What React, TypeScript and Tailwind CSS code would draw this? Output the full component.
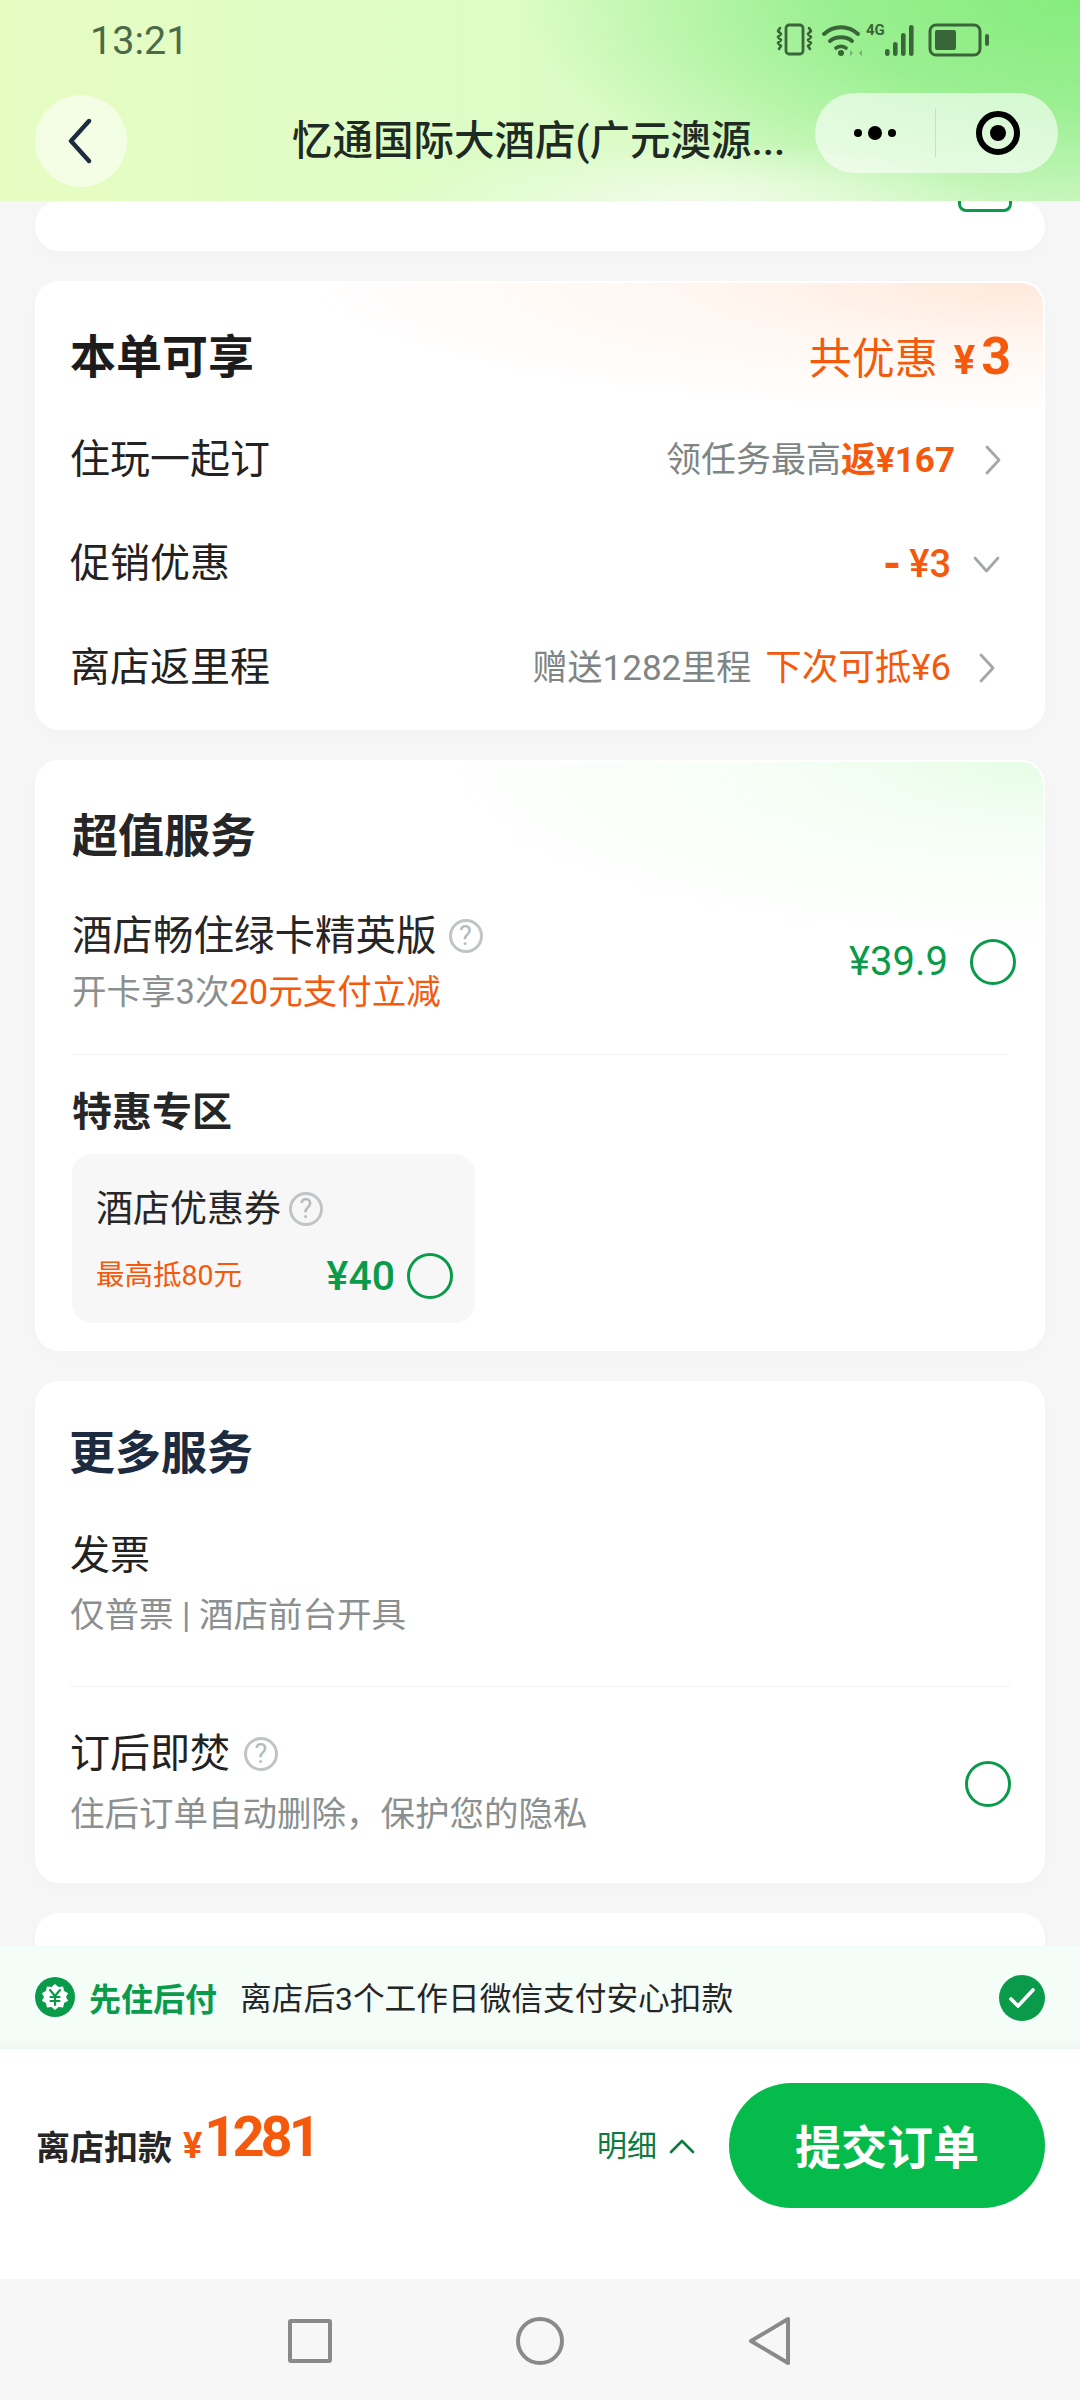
const ORANGE = 'text-[#f5590c]'

function Help({ className = '' }: { className?: string }) {
  return (
    <span className={`inline-flex items-center justify-center w-[34px] h-[34px] rounded-full border-[3px] border-[#bfc5c5] text-[#b4baba] text-[27px] leading-none ${className}`}>
      ?
    </span>
  )
}

function Radio() {
  return <span className="block w-[46px] h-[46px] rounded-full border-[3px] border-[#0a9b4a] shrink-0" />
}

function ChevronRight() {
  return (
    <svg className="block" width="18" height="30" viewBox="0 0 18 30" fill="none" stroke="#a3a8a8" strokeWidth="2.8" strokeLinecap="round" strokeLinejoin="round">
      <path d="M3 2l12 13L3 28" />
    </svg>
  )
}

function ChevronDown() {
  return (
    <svg className="block" width="27" height="17" viewBox="0 0 27 17" fill="none" stroke="#a3a8a8" strokeWidth="2.8" strokeLinecap="round" strokeLinejoin="round">
      <path d="M2 2l11.5 13L25 2" />
    </svg>
  )
}

function StatusIcons() {
  return (
    <svg width="220" height="34" viewBox="0 0 220 34" fill="none" stroke="#3a6538" strokeLinecap="round" strokeLinejoin="round">
      <rect x="11" y="2" width="17" height="29" rx="3" strokeWidth="2.8" />
      <path d="M5 5l-2 3 3 3-3 3 3 3-3 3 3 3-2 3M34 5l2 3-3 3 3 3-3 3 3 3-3 3 2 3" strokeWidth="2.6" />
      <path d="M49 11c10-9 24-9 34 0" strokeWidth="4" />
      <path d="M55 18c6-5 16-5 22 0" strokeWidth="4" />
      <path d="M61 25c3-2 7-2 10 0" strokeWidth="3.6" />
      <circle cx="66" cy="30" r="3" fill="#3a6538" stroke="none" />
      <path d="M78 30l-3-3v6zM84 30l3-3v6z" fill="#7fa87a" stroke="none" />
      <rect x="110" y="26" width="4.6" height="7" rx="2.3" fill="#3a6538" stroke="none" />
      <rect x="118" y="19" width="4.6" height="14" rx="2.3" fill="#3a6538" stroke="none" />
      <rect x="126" y="10" width="4.6" height="23" rx="2.3" fill="#3a6538" stroke="none" />
      <rect x="134" y="2" width="4.6" height="31" rx="2.3" fill="#3a6538" stroke="none" />
      <rect x="155" y="2" width="50" height="30" rx="6" strokeWidth="3" />
      <rect x="160" y="7" width="21" height="20" rx="2" fill="#3a6538" stroke="none" />
      <rect x="210" y="11" width="4" height="12" rx="2" fill="#3a6538" stroke="none" />
    </svg>
  )
}

function Header() {
  return (
    <div className="h-[201px] shrink-0 bg-[radial-gradient(ellipse_300px_60px_at_690px_200px,rgba(240,252,232,0.95),rgba(240,252,232,0)),radial-gradient(ellipse_560px_230px_at_100%_0%,#86ec7e_0%,rgba(134,236,126,0.75)_45%,rgba(134,236,126,0)_100%),linear-gradient(90deg,#e6fdc2_0%,#dcfcc6_50%,#d4f8ca_100%)]">
      <div className="relative h-[80px] pl-[90px] pt-[2px] flex items-center text-[39.5px] leading-none text-[#4c6a48]">
        13:21
        <div className="absolute left-[775px] top-[23px]">
          <StatusIcons />
        </div>
        <span className="absolute left-[866px] top-[23px] text-[15px] leading-none font-bold text-[#3a6538]">4G</span>
      </div>
      <div className="flex items-start">
        <button className="mt-[15px] ml-[35px] w-[92px] h-[92px] rounded-full bg-white/55 flex items-center justify-center pr-[3px]">
          <svg width="26" height="46" viewBox="0 0 26 46" fill="none" stroke="#1c2b3f" strokeWidth="4.4" strokeLinecap="round" strokeLinejoin="round">
            <path d="M22 3L4 23l18 20" />
          </svg>
        </button>
        <div className="mt-[15px] ml-[165px] w-[498px] h-[92px] flex items-center text-[40.5px] leading-none font-medium text-[#1f2a24] whitespace-nowrap">
          忆通国际大酒店(广元澳源...
        </div>
        <div className="mt-[13px] ml-[25px] w-[243px] h-[80px] rounded-full bg-white/60 flex items-center">
          <div className="w-[120px] flex items-center justify-center gap-[6px]">
            <span className="w-[8px] h-[8px] rounded-full bg-black" />
            <span className="w-[14px] h-[14px] rounded-full bg-black" />
            <span className="w-[8px] h-[8px] rounded-full bg-black" />
          </div>
          <div className="w-px h-[48px] bg-black/10" />
          <div className="flex-1 flex items-center justify-center pl-[2px]">
            <span className="w-[44px] h-[44px] rounded-full border-[6px] border-black flex items-center justify-center">
              <span className="w-[16px] h-[16px] rounded-full bg-black" />
            </span>
          </div>
        </div>
      </div>
    </div>
  )
}

function Card({ className = '', children }: { className?: string; children?: React.ReactNode }) {
  return <div className={`rounded-[24px] shadow-[0_6px_16px_rgba(0,0,0,0.015)] ${className}`}>{children}</div>
}

function DiscountRow({ label, children }: { label: string; children: React.ReactNode }) {
  return (
    <div className="h-[104px] pt-[4px] flex items-center justify-between">
      <span className="text-[40px] leading-none text-[#222] -ml-[1px]">{label}</span>
      <div className="flex items-center text-[35px] leading-none">{children}</div>
    </div>
  )
}

export default function App() {
  return (
    <div
      className="h-[2400px] w-[1080px] flex flex-col overflow-hidden bg-[#f6f6f6]"
      style={{ fontFamily: 'Roboto, "Noto Sans CJK SC", sans-serif' }}
    >
      <Header />

      <div className="flex-1 min-h-0 overflow-hidden px-[35px] flex flex-col gap-[30px]">
        <Card className="bg-white h-[50px] shrink-0 overflow-hidden px-[36px]">
          <div className="-mt-[49px] h-[60px] flex justify-between items-end">
            <span className="text-[40px] leading-none text-[#222] translate-y-[-9px]">联系手机</span>
            <span className="w-[54px] h-[50px] rounded-[8px] border-[3px] border-[#0a9b4a] mr-[-3px]" />
          </div>
        </Card>

        <Card className="shrink-0 h-[449px] px-[34px] pt-[42px] border-2 border-white bg-[radial-gradient(ellipse_740px_130px_at_100%_0%,#ffe8da_0%,#fff6f0_45%,#ffffff_100%)]">
          <div className="h-[64px] flex items-center justify-between mb-[17px]">
            <span className="text-[46px] leading-none font-bold text-[#1c1c1c] -ml-[1px]">本单可享</span>
            <span className={`flex items-baseline text-[43px] leading-none mr-[-2px] ${ORANGE}`}>
              共优惠
              <span className="ml-[16px] font-bold text-[40px]">¥</span>
              <span className="ml-[6px] font-bold text-[52px]">3</span>
            </span>
          </div>
          <DiscountRow label="住玩一起订">
            <span className="text-[#7f8484]">领任务最高</span>
            <span className={`font-bold ${ORANGE}`}>返¥167</span>
            <span className="ml-[29px] mr-[7px]"><ChevronRight /></span>
          </DiscountRow>
          <DiscountRow label="促销优惠">
            <span className={`font-bold text-[46px] mr-[8px] ${ORANGE}`}>-</span>
            <span className={`font-medium text-[38px] ${ORANGE}`}>¥3</span>
            <span className="ml-[22px] mr-[9px]"><ChevronDown /></span>
          </DiscountRow>
          <DiscountRow label="离店返里程">
            <span className="text-[#7f8484]">赠送1282里程</span>
            <span className={`ml-[14px] text-[36.5px] ${ORANGE}`}>下次可抵¥6</span>
            <span className="ml-[27px] mr-[13px]"><ChevronRight /></span>
          </DiscountRow>
        </Card>

        <Card className="shrink-0 h-[591px] px-[35px] pt-[42px] border-2 border-white bg-[radial-gradient(ellipse_640px_190px_at_100%_0%,#e6fde6_0%,#f6fef6_40%,#ffffff_100%)]">
          <div className="h-[64px] flex items-center text-[46px] leading-none font-bold text-[#262626]">超值服务</div>
          <div className="mt-[40px] flex items-center justify-between">
            <div>
              <div className="h-[56px] flex items-center text-[40.5px] leading-none text-[#262626]">
                酒店畅住绿卡精英版
                <Help className="ml-[12px]" />
              </div>
              <div className="h-[56px] flex items-center text-[34.5px] leading-none text-[#8b8f8f]">
                开卡享3次<span className={ORANGE}>20元支付立减</span>
              </div>
            </div>
            <div className="flex items-center gap-[22px] mr-[-8px] mb-[4px]">
              <span className="text-[40px] leading-none text-[#0a9b4a]">¥39.9</span>
              <Radio />
            </div>
          </div>
          <div className="mt-[34px] h-px bg-[#f2f2f2]" />
          <div className="mt-[30px] h-[56px] flex items-center text-[40px] leading-none font-bold text-[#262626]">特惠专区</div>
          <div className="mt-[13px] w-[403px] h-[169px] rounded-[20px] bg-[#f7f7f7] pl-[24px] pr-[22px] pt-[29px]">
            <div className="h-[52px] flex items-center text-[37px] leading-none text-[#262626]">
              酒店优惠券
              <Help className="ml-[8px]" />
            </div>
            <div className="mt-[15px] h-[52px] flex items-center justify-between">
              <span className={`text-[28.5px] leading-none ${ORANGE}`}>最高抵80元</span>
              <div className="flex items-center gap-[12px]">
                <span className="text-[41px] leading-none font-medium text-[#0a9b4a]">¥40</span>
                <Radio />
              </div>
            </div>
          </div>
        </Card>

        <Card className="shrink-0 h-[502px] bg-white px-[35px] pt-[40px]">
          <div className="h-[64px] flex items-center text-[46px] leading-none font-bold text-[#1c2b3f] -ml-[1px]">更多服务</div>
          <div className="mt-[43px] h-[56px] flex items-center text-[40px] leading-none text-[#222]">发票</div>
          <div className="mt-[3px] h-[56px] flex items-center text-[34.5px] leading-none text-[#8b8f8f]">仅普票 | 酒店前台开具</div>
          <div className="mt-[43px] h-px bg-[#f2f2f2]" />
          <div className="mt-[39px] flex items-center justify-between">
            <div>
              <div className="h-[56px] flex items-center text-[40px] leading-none text-[#222]">
                订后即焚
                <Help className="ml-[14px]" />
              </div>
              <div className="mt-[4px] h-[56px] flex items-center text-[34.5px] leading-none text-[#8b8f8f]">
                住后订单自动删除，保护您的隐私
              </div>
            </div>
            <span className="mr-[-1px]"><Radio /></span>
          </div>
        </Card>

        <Card className="shrink-0 h-[200px] bg-white" />
      </div>

      <div className="shrink-0 h-[103px] pl-[35px] pr-[35px] flex items-center bg-[#f4fdf8] shadow-[inset_0_-16px_14px_-14px_rgba(0,0,0,0.05)]">
        <svg className="mb-[2px]" width="40" height="40" viewBox="0 0 40 40" fill="none">
          <circle cx="20" cy="20" r="20" fill="#0a9b4a" />
          <path d="M20 7l3.5 3 4.6-.6 1 4.5 4 2.4L31 20l2.1 3.7-4 2.4-1 4.5-4.6-.6L20 33l-3.5-3-4.6.6-1-4.5-4-2.4L9 20l-2.1-3.7 4-2.4 1-4.5 4.6.6z" fill="#fff" />
          <path d="M15 13l5 6 5-6M20 19v9M15.5 20h9M15.5 24h9" stroke="#0a9b4a" strokeWidth="2.2" strokeLinecap="round" strokeLinejoin="round" />
        </svg>
        <span className="ml-[14px] pt-[5px] text-[32px] leading-none font-bold text-[#0a9b4a]">先住后付</span>
        <span className="ml-[23px] pt-[5px] text-[31.7px] leading-none text-[#262626]">离店后3个工作日微信支付安心扣款</span>
        <span className="ml-auto w-[46px] h-[46px] rounded-full bg-[#0a9b4a] flex items-center justify-center">
          <svg width="30" height="24" viewBox="0 0 30 24" fill="none" stroke="#fff" strokeWidth="3.6" strokeLinecap="round" strokeLinejoin="round">
            <path d="M4 13l7 7L26 4" />
          </svg>
        </span>
      </div>

      <div className="shrink-0 h-[230px] bg-white pl-[36px] pr-[35px] pt-[34px] flex items-start">
        <div className="h-[125px] flex items-baseline pt-[30px]">
          <span className="text-[34px] leading-none font-bold text-[#262626]">离店扣款</span>
          <span className={`ml-[11px] text-[36px] leading-none font-bold -translate-y-[2px] ${ORANGE}`}>¥</span>
          <span className={`ml-[2px] text-[56px] leading-none font-bold tracking-[-4px] -translate-y-[4px] ${ORANGE}`}>1281</span>
        </div>
        <div className="ml-auto h-[125px] flex items-center">
          <span className="text-[30px] leading-none text-[#0d7a3e]">明细</span>
          <svg className="ml-[12px]" width="26" height="16" viewBox="0 0 26 16" fill="none" stroke="#0d7a3e" strokeWidth="2.6" strokeLinecap="round" strokeLinejoin="round">
            <path d="M2 14L13 3l11 11" />
          </svg>
        </div>
        <button className="ml-[34px] w-[316px] h-[125px] pt-[5px] rounded-full bg-[#04bb4b] text-white text-[46px] leading-none font-bold">
          提交订单
        </button>
      </div>

      <div className="shrink-0 h-[121px] bg-[#f7f7f7] flex items-center justify-center">
        <div className="flex items-center gap-[184px] mb-[-2px]">
          <span className="block w-[44px] h-[44px] rounded-[3px] border-[4px] border-[#8a8a8a]" />
          <span className="block w-[48px] h-[48px] rounded-full border-[4px] border-[#8a8a8a]" />
          <svg width="44" height="50" viewBox="0 0 44 50" fill="none" stroke="#8a8a8a" strokeWidth="4" strokeLinejoin="round">
            <path d="M40 3v44L3 25z" />
          </svg>
        </div>
      </div>
    </div>
  )
}
